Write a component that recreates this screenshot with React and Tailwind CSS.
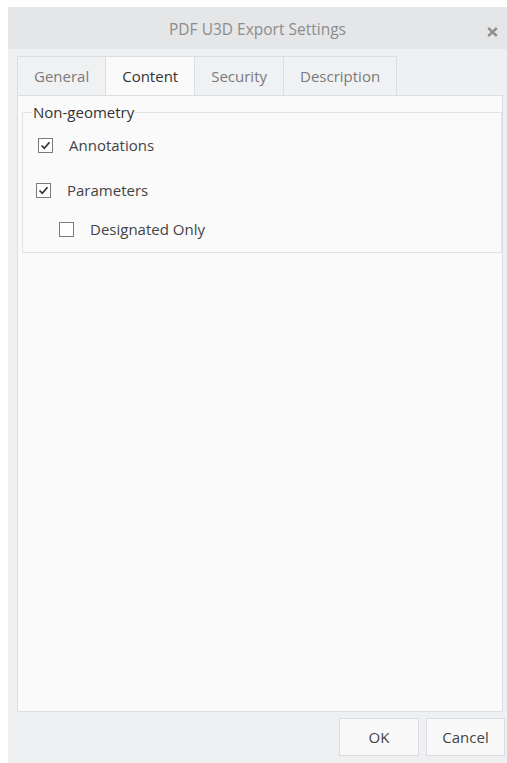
import { useState } from 'react';

const tabs = ['General', 'Content', 'Security', 'Description'];

const CheckBox = ({ checked, onChange, label, className = '' }) => (
  <label className={`flex items-center h-[22px] cursor-pointer ${className}`} onClick={onChange}>
    <span className="flex items-center justify-center w-[15px] h-[15px] border border-[#7a7a7a] bg-white">
      {checked && (
        <svg width="11" height="11" viewBox="0 0 11 11" fill="none">
          <path d="M1.5 5.5 L4.3 8.3 L9.5 2.2" stroke="#333" strokeWidth="1.7" />
        </svg>
      )}
    </span>
    <span className="ml-[16px] text-[15px] text-[#444]">{label}</span>
  </label>
);

const App = () => {
  const [activeTab, setActiveTab] = useState('Content');
  const [annotations, setAnnotations] = useState(true);
  const [parameters, setParameters] = useState(true);
  const [designatedOnly, setDesignatedOnly] = useState(false);

  return (
    <div className="w-full h-[763px] bg-white pt-[7px] pl-[8px] overflow-hidden" style={{ fontFamily: '"Open Sans", "Noto Sans", sans-serif' }}>
      <div className="h-full flex flex-col bg-[#eef0f2]">
        {/* Title bar */}
        <div className="relative h-[42px] shrink-0 flex items-center justify-center pt-[4px] bg-[#e5e6e8]">
          <span className="text-[15.5px] text-[#8c8c8c]">PDF U3D Export Settings</span>
          <svg className="absolute right-[9px] top-[20px]" width="11" height="10" viewBox="0 0 11 10">
            <path d="M1.2 1 L9.8 9 M9.8 1 L1.2 9" stroke="#8f8f8f" strokeWidth="2.4" />
          </svg>
        </div>

        {/* Tabs */}
        <div className="flex pl-[9px] pt-[7px] shrink-0">
          {tabs.map(tab => {
            const active = tab === activeTab;
            return (
              <button
                key={tab}
                onClick={() => setActiveTab(tab)}
                className={`h-[39px] px-[16px] text-[15px] border-t border-r border-[#dcdee1] ${
                  tab === 'General' ? 'border-l' : ''
                } ${active ? 'bg-[#fafafa] text-[#333] -mb-px relative z-10' : 'bg-[#f0f1f3] text-[#7a7a7a]'}`}
              >
                {tab}
              </button>
            );
          })}
        </div>

        {/* Tab panel */}
        <div className="flex-1 ml-[9px] mr-[4px] bg-[#fafafa] border border-[#dcdee1] pt-[6px] pl-[4px]">
          {activeTab === 'Content' && (
            <fieldset className="border border-[#e1e3e6] pl-[12px] pb-[12px]">
              <legend className="px-[1px] -ml-[3px] text-[15px] text-[#333] leading-[20px]">Non-geometry</legend>
              <CheckBox
                className="mt-[12px] ml-[3px]"
                checked={annotations}
                onChange={() => setAnnotations(!annotations)}
                label="Annotations"
              />
              <CheckBox
                className="mt-[23px] ml-[1px]"
                checked={parameters}
                onChange={() => setParameters(!parameters)}
                label="Parameters"
              />
              <CheckBox
                className="mt-[17px] ml-[24px]"
                checked={designatedOnly}
                onChange={() => setDesignatedOnly(!designatedOnly)}
                label="Designated Only"
              />
            </fieldset>
          )}
        </div>

        {/* Footer buttons */}
        <div className="h-[51px] shrink-0 flex justify-end items-start pt-[6px] pr-[2px] gap-[7px]">
          <button className="w-[80px] h-[38px] bg-[#f9f9fa] border border-[#dadcdf] text-[15px] text-[#444]">OK</button>
          <button className="w-[79px] h-[38px] bg-[#f9f9fa] border border-[#dadcdf] text-[15px] text-[#444]">Cancel</button>
        </div>
      </div>
    </div>
  );
};

export default App;
